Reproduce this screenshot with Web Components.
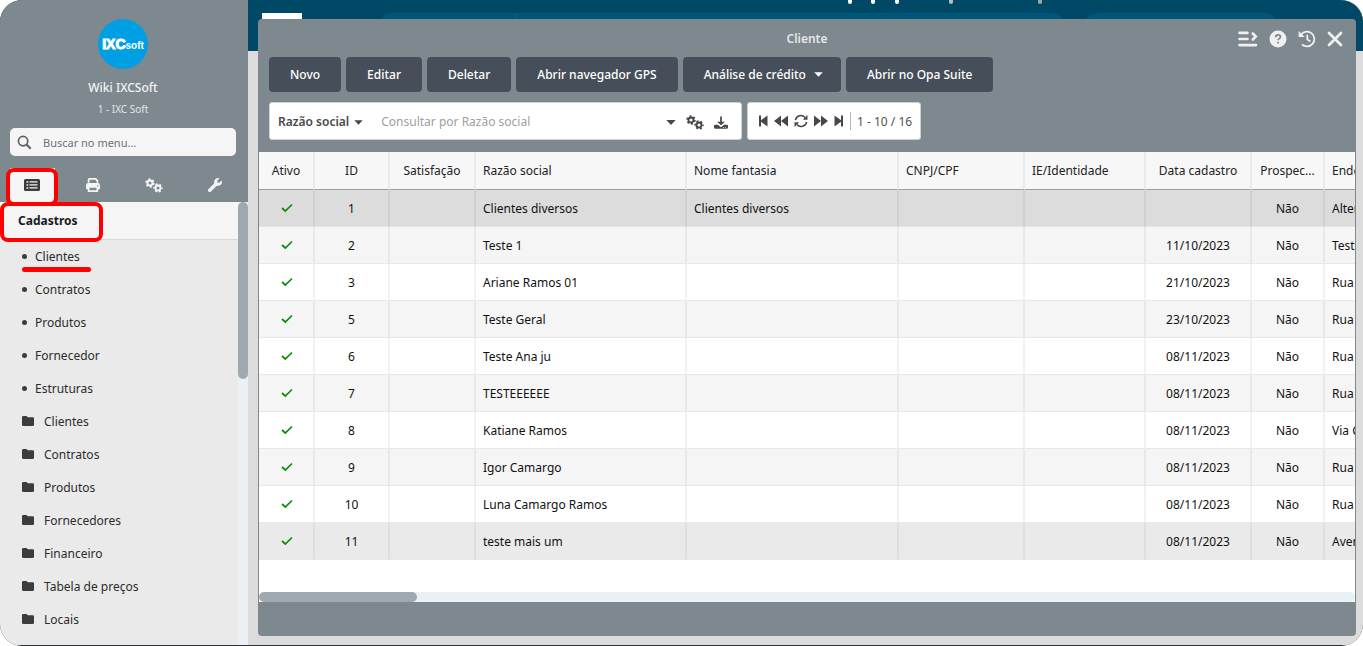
<!DOCTYPE html>
<html lang="pt-BR">
<head>
<meta charset="utf-8">
<title>Cliente - IXCSoft</title>
<style>
html, body { margin: 0; height: 100%; background: #fff; }
body { font: 12px/16px "Noto Sans", "Open Sans", sans-serif; color: #1b1c1e; }
</style>
</head>
<body>
<ixc-app></ixc-app>

<script>
const ICONS = {
  search: ['0 0 16 16', '<circle cx="6.5" cy="6.5" r="5" fill="none" stroke="currentColor" stroke-width="1.8"/><path d="M10.2 10.2 14.6 14.6" stroke="currentColor" stroke-width="2.2"/>'],
  list: ['0 0 16 12', '<path fill-rule="evenodd" d="M1.5 0h13A1.5 1.5 0 0 1 16 1.500v9a1.500 1.500 0 0 1-1.500 1.500h-13A1.500 1.500 0 0 1 0 10.500v-9A1.500 1.500 0 0 1 1.500 0zM2.500 2.200v1.600h1.800V2.200zm3 .1v1.300h8V2.300zm-3 2.900v1.600h1.800V5.200zm3 .1v1.300h8V5.300zm-3 2.900v1.600h1.800V8.200zm3 .1v1.300h8V8.300z"/>'],
  print: ['0 0 16 16', '<path d="M3 5.500V2a1 1 0 0 1 1-1h7l2 2v2.500" fill="none" stroke="currentColor" stroke-width="2"/><path fill-rule="evenodd" d="M2.500 5.800h11A2.500 2.500 0 0 1 16 8.300V12a.8.8 0 0 1-.8.8H14V15a1 1 0 0 1-1 1H3a1 1 0 0 1-1-1v-2.200H.8A.8.800 0 0 1 0 12V8.300a2.500 2.500 0 0 1 2.500-2.500zM4 11v3h8v-3zm8.800-3v1.300h1.300V8z"/>'],
  cogs: ['0 0 18 15', '<g fill="none" stroke="currentColor"><circle cx="5" cy="5" r="2.500" stroke-width="1.900"/><circle cx="5" cy="5" r="3.900" stroke-width="1.600" stroke-dasharray="2 2.084"/><circle cx="13" cy="10" r="2.500" stroke-width="1.900"/><circle cx="13" cy="10" r="3.900" stroke-width="1.600" stroke-dasharray="2 2.084" stroke-dashoffset="1"/></g>'],
  wrench: ['0 0 512 512', '<path d="M507.730 109.100c-2.240-9.030-13.540-12.090-20.120-5.510l-74.360 74.360-67.880-11.310-11.310-67.880 74.360-74.360c6.620-6.620 3.430-17.900-5.660-20.160-47.380-11.740-99.550.91-136.580 37.930-39.640 39.640-50.550 97.100-34.050 147.200L18.740 402.760c-24.990 24.990-24.990 65.510 0 90.500 24.990 24.990 65.510 24.990 90.500 0l213.210-213.210c50.120 16.710 107.470 5.680 147.370-34.220 37.070-37.070 49.700-89.320 37.910-136.730z"/>'],
  folder: ['0 0 12 10', '<path d="M1.200 0h3.300l1.300 1.300h5A1.200 1.200 0 0 1 12 2.500v6.300A1.200 1.200 0 0 1 10.800 10H1.200A1.200 1.200 0 0 1 0 8.800V1.200A1.200 1.200 0 0 1 1.200 0z"/>'],
  caret: ['0 0 10 5', '<path d="M.3 0h9.400L5 5z"/>'],
  check: ['0 0 12 10', '<path d="M1 5l3.300 3L11 1.500" fill="none" stroke="currentColor" stroke-width="1.700"/>'],
  download: ['0 0 16 16', '<path d="M7 1h2v6h3.500L8 11.200 3.500 7H7z"/><path fill-rule="evenodd" d="M1.200 10.500h3.300L8 13.300l3.500-2.800h3.300A1.200 1.200 0 0 1 16 11.700v2.100a1.200 1.200 0 0 1-1.200 1.200H1.200A1.200 1.200 0 0 1 0 13.800v-2.100a1.200 1.200 0 0 1 1.200-1.200zM10.500 13v1h1v-1zm2.200 0v1h1v-1z"/>'],
  first: ['0 0 10 12', '<path d="M1 .5h2v4.700L9.500 .5v11L3 6.800v4.700H1z"/>'],
  prev: ['0 0 14 12', '<path d="M7 .5v11L0 6zM14 .5v11L7 6z"/>'],
  next: ['0 0 14 12', '<path d="M0 .5v11L7 6zM7 .5v11L14 6z"/>'],
  last: ['0 0 10 12', '<path d="M9 .5H7v4.700L.5 .5v11L7 6.800v4.700h2z"/>'],
  sync: ['0 0 14 14', '<path d="M1.400 6.200A5.500 5.500 0 0 1 11 3.400M12.600 7.800A5.500 5.500 0 0 1 3 10.600" fill="none" stroke="currentColor" stroke-width="1.500"/><path d="M13.500 1v4.800H8.800zM.5 13v-4.800h4.700z"/>'],
  dock: ['0 0 20 16', '<path d="M1.500 1.900h8M1.500 8h8M1.500 14.100h16.500M14.800 2.500l3 3-3 3" fill="none" stroke="currentColor" stroke-width="2.600" stroke-linecap="round"/>'],
  help: ['0 0 18 18', '<circle cx="9" cy="9" r="8.500"/><path d="M6.600 7.200C6.700 5.600 7.700 4.900 9 4.900c1.400 0 2.400.8 2.400 2 0 1.700-2.300 1.700-2.300 3.400M9.100 11.800v1.700" fill="none" stroke="#7d898e" stroke-width="1.700"/>'],
  history: ['0 0 18 18', '<path d="M3.200 4.400A7.400 7.400 0 1 1 4 14.500M9.300 4.800v4.600l3 2.200" fill="none" stroke="currentColor" stroke-width="1.800"/><path d="M.6 1v6h6z"/>'],
  close: ['0 0 16 16', '<path d="M2 2l12 12M14 2 2 14" fill="none" stroke="currentColor" stroke-width="2.700" stroke-linecap="round"/>'],
};

const icon = (name, width, height) =>
  `<svg aria-hidden="true" width="${width}" height="${height}" viewBox="${ICONS[name][0]}" fill="currentColor">${ICONS[name][1]}</svg>`;

const BASE = `
  *, *::before { box-sizing: border-box; }
  svg { display: block; flex: none; }
  button, input { font: inherit; color: inherit; margin: 0; padding: 0; border: 0; background: none; outline: 0; }
  button { cursor: pointer; }
  a { color: inherit; text-decoration: none; }
`;

class BaseElement extends HTMLElement {
  connectedCallback() {
    if (this.shadowRoot) return;
    const t = document.createElement('template');
    t.innerHTML = `<style>${BASE}${this.styles()}</style>${this.markup()}`;
    this.attachShadow({ mode: 'open' }).append(t.content.cloneNode(true));
  }
  styles() { return ''; }
  markup() { return '<slot></slot>'; }
}

customElements.define('ixc-app', class extends BaseElement {
  styles() { return `
    :host { display: grid; grid-template-columns: 248px 1fr; height: 100vh; position: relative; overflow: hidden;
      border-radius: 22px; background: #2e3236; padding-bottom: 1px; box-sizing: border-box; }
    ixc-sidebar, ixc-desktop { min-width: 0; min-height: 0; }
  `; }
  markup() { return `
    <ixc-sidebar></ixc-sidebar>
    <ixc-desktop><ixc-window heading="Cliente"></ixc-window></ixc-desktop>
  `; }
});

customElements.define('ixc-logo', class extends BaseElement {
  styles() { return `
    :host { display: flex; align-items: baseline; justify-content: center; width: 50px; height: 50px; border-radius: 50%;
      background: #009fe3; color: #fff; font: bold 14px/50px "Liberation Sans", sans-serif; }
    span { -webkit-text-stroke: 1px #fff; }
    small { font-size: 10px; }
  `; }
  markup() { return '<span>IXC</span><small>soft</small>'; }
});

customElements.define('ixc-sidebar', class extends BaseElement {
  styles() { return `
    :host { display: flex; flex-direction: column; position: relative; background: #7d898e; }
    header { display: flex; flex-direction: column; align-items: center; padding: 19px 2px 0 0; color: #f2f4f4; }
    header strong { font-weight: 500; margin-top: 11px; }
    header span { font-size: 10px; margin-top: 5px; color: #e2e6e7; }
    form { display: flex; align-items: center; height: 28px; margin: 11px 12px 0 10px; padding-left: 7px; gap: 11px;
      border-radius: 5px; background: #f5f5f5; color: #606060; }
    form input { flex: 1; min-width: 0; height: 28px; padding-top: 1px; font-size: 11px; }
    form input::placeholder { color: #707070; opacity: 1; }
    nav.tabs { display: grid; grid-template-columns: repeat(4, 1fr); height: 34px; margin: 12px 3px 0 2px; color: #f5f5f5; }
    nav.tabs button { display: grid; place-items: center; }
    nav.tabs button.active { background: #f5f5f5; color: #3c3c3c; margin: 0 8px; }
    .menu { flex: 1; min-height: 0; display: flex; background: #eaeaea; }
    .list { flex: 1; overflow: hidden; }
    h2 { margin: 0; font-size: 12px; line-height: 37px; padding-left: 18px; background: #f5f5f5; border-bottom: 1px solid #dadada; }
    .bar { width: 10px; background: #e9f1f5; }
    .bar div { height: 40%; border-radius: 5px; background: #a1a9b0; }
    .mark { position: absolute; border: 4px solid #f00; border-radius: 8px; pointer-events: none; }
    .tab-mark { left: 6px; top: 168px; width: 52px; height: 38px; }
    .title-mark { left: 0; top: 202px; width: 103px; height: 40px; }
    .line { left: 22px; top: 267px; width: 69px; height: 5px; border: 0; border-radius: 3px; background: #f00; }
  `; }
  markup() {
    const links = ['Clientes', 'Contratos', 'Produtos', 'Fornecedor', 'Estruturas'];
    const folders = ['Clientes', 'Contratos', 'Produtos', 'Fornecedores', 'Financeiro', 'Tabela de preços', 'Locais'];
    return `
    <header><ixc-logo></ixc-logo><strong>Wiki IXCSoft</strong><span>1 - IXC Soft</span></header>
    <form role="search">${icon('search', 15, 15)}<input type="text" aria-label="Buscar no menu" placeholder="Buscar no menu..."></form>
    <nav class="tabs">
      <button type="button" class="active" aria-label="Menu">${icon('list', 16, 12)}</button>
      <button type="button" aria-label="Relatórios">${icon('print', 14, 14)}</button>
      <button type="button" aria-label="Configurações">${icon('cogs', 18, 15)}</button>
      <button type="button" aria-label="Ferramentas">${icon('wrench', 14, 14)}</button>
    </nav>
    <div class="menu">
      <div class="list">
        <h2>Cadastros</h2>
        ${links.map(l => `<ixc-menu-item>${l}</ixc-menu-item>`).join('')}
        ${folders.map(l => `<ixc-menu-item folder>${l}</ixc-menu-item>`).join('')}
      </div>
      <div class="bar"><div></div></div>
    </div>
    <div class="mark tab-mark"></div><div class="mark title-mark"></div><div class="mark line"></div>`;
  }
});

customElements.define('ixc-menu-item', class extends BaseElement {
  styles() { return `
    :host { display: block; color: #2c2c2c; }
    a { display: flex; align-items: center; height: 33px; padding-left: 22px; gap: 8px; }
    :host([folder]) a { gap: 10px; }
    i { width: 5px; height: 5px; border-radius: 50%; background: #3c3c3c; }
    svg { color: #3c3c3c; margin-bottom: 1px; }
  `; }
  markup() { return `<a href="#">${this.hasAttribute('folder') ? icon('folder', 12, 10) : '<i></i>'}<slot></slot></a>`; }
});

customElements.define('ixc-desktop', class extends BaseElement {
  styles() { return `
    :host { display: block; position: relative; background: #dcdcdc; }
    .top { display: flex; height: 51px; padding: 13px 84px 0 14px; background: #004966; }
    .brand { width: 40px; background: #fff; }
    .field { height: 30px; border-radius: 20px; background: #00567a; margin-left: 76px; flex: 688; }
    .field + .field { margin-left: 17px; flex: 196; }
    .field i { display: block; width: 1px; height: 30px; margin-left: 138px; background: #126285; }
    .dots i { position: absolute; top: 0; width: 4px; height: 4px; border-radius: 0 0 2px 2px; background: #fff; }
    .dots i:nth-child(1) { left: 600px; } .dots i:nth-child(2) { left: 623px; }
    .dots i:nth-child(3) { left: 647px; } .dots i:nth-child(4) { left: 701px; background: #bbb; }
    .dots i:nth-child(5) { left: 790px; background: #9aa; }
    ::slotted(ixc-window) { position: absolute; inset: 19px 7px 9px 10px; }
  `; }
  markup() { return `
    <div class="top"><div class="brand"></div><div class="field"><i></i></div><div class="field"></div></div>
    <div class="dots"><i></i><i></i><i></i><i></i><i></i></div>
    <slot></slot>`; }
});

customElements.define('ixc-button', class extends BaseElement {
  styles() { return `
    :host { display: block; }
    button { display: flex; align-items: center; gap: 8px; height: 35px; padding: 0 21px; border-radius: 4px;
      background: #464f59; color: #fff; font-weight: 500; white-space: nowrap; }
    :host([menu]) button { padding-right: 18px; }
  `; }
  markup() { return `<button type="button"><slot></slot>${this.hasAttribute('menu') ? icon('caret', 9, 5) : ''}</button>`; }
});

customElements.define('ixc-window', class extends BaseElement {
  styles() { return `
    :host { display: flex; flex-direction: column; overflow: hidden; border-radius: 4px; background: #7d898e; }
    header { display: grid; grid-template-columns: 1fr auto 1fr; align-items: center; height: 38px; padding-top: 2px; color: #f0f0f0; }
    h1 { grid-column: 2; margin: 0; font-size: 12px; font-weight: 600; color: #e4e7e8; }
    .controls { display: flex; justify-content: flex-end; align-items: center; gap: 11px; padding-right: 13px; }
    .controls button { display: block; }
    .actions { display: flex; gap: 5px; padding: 0 11px; }
    .tools { display: flex; gap: 5px; padding: 10px 11px 12px; }
    .box { display: flex; align-items: center; height: 38px; border: 1px solid #cfd2d4; border-radius: 3px; background: #fff; color: #484848; }
    .search { width: 473px; padding: 2px 13px 0 8px; }
    .search .key { display: flex; align-items: center; gap: 5px; font-weight: 600; }
    .search input { flex: 1; min-width: 0; margin-left: 18px; }
    .search input::placeholder { color: #a0a0a0; opacity: 1; }
    .search .icons { display: flex; align-items: center; gap: 10px; }
    .pager { padding: 0 8px 0 10px; gap: 6px; }
    .pager span { padding: 2px 0 0 6px; border-left: 1px solid #b5b5b5; color: #505050; }
    ixc-grid { flex: 1; min-height: 0; margin: 0 1px; }
    footer { height: 34px; }
  `; }
  markup() { return `
    <header><h1>${this.getAttribute('heading')}</h1>
      <div class="controls">
        <button type="button" aria-label="Encaixar">${icon('dock', 20, 16)}</button>
        <button type="button" aria-label="Ajuda">${icon('help', 18, 18)}</button>
        <button type="button" aria-label="Histórico">${icon('history', 18, 18)}</button>
        <button type="button" aria-label="Fechar">${icon('close', 16, 16)}</button>
      </div>
    </header>
    <div class="actions">
      <ixc-button>Novo</ixc-button><ixc-button>Editar</ixc-button><ixc-button>Deletar</ixc-button>
      <ixc-button>Abrir navegador GPS</ixc-button><ixc-button menu>Análise de crédito</ixc-button><ixc-button>Abrir no Opa Suite</ixc-button>
    </div>
    <div class="tools">
      <div class="box search">
        <button type="button" class="key">Razão social ${icon('caret', 9, 5)}</button>
        <input type="text" aria-label="Consultar" placeholder="Consultar por Razão social">
        <div class="icons">
          <button type="button" aria-label="Opções">${icon('caret', 10, 5)}</button>
          <button type="button" aria-label="Filtros">${icon('cogs', 18, 15)}</button>
          <button type="button" aria-label="Exportar">${icon('download', 14, 15)}</button>
        </div>
      </div>
      <div class="box pager">
        <button type="button" aria-label="Primeira">${icon('first', 10, 12)}</button>
        <button type="button" aria-label="Anterior">${icon('prev', 14, 12)}</button>
        <button type="button" aria-label="Atualizar">${icon('sync', 14, 14)}</button>
        <button type="button" aria-label="Próxima">${icon('next', 14, 12)}</button>
        <button type="button" aria-label="Última">${icon('last', 10, 12)}</button>
        <span>1 - 10 / 16</span>
      </div>
    </div>
    <ixc-grid></ixc-grid>
    <footer></footer>`; }
});

customElements.define('ixc-grid', class extends BaseElement {
  styles() { return `
    :host { display: flex; flex-direction: column; background: #fff; }
    .view { flex: 1; min-height: 0; overflow: hidden; }
    table { table-layout: fixed; width: 1216px; border-collapse: separate; border-spacing: 0; }
    th, td { height: 37px; padding: 2px 5px 0 7px; border-bottom: 1px solid #e8e8e8; border-right: 2px solid rgba(0,0,0,.05);
      text-align: left; font-weight: 400; white-space: nowrap; overflow: hidden; color: #111; }
    th { height: 38px; padding-top: 0; background: #f7f7f7; border-bottom-color: #97a1a6; color: #222; }
    .c { text-align: center; padding-left: 5px; }
    td:first-child { padding: 0 5px 0 6px; }
    tbody tr:nth-child(odd) { background: #fff; }
    tbody tr:nth-child(even) { background: #f5f5f5; }
    tbody tr.selected { background: #dcdcdc; }
    tbody tr:last-child { background: #eaeaea; }
    tbody tr.selected td { border-bottom-color: #e4e4e4; }
    svg { margin: auto; color: #0d8a0d; }
    .bar { height: 10px; border-radius: 5px; background: #e9f1f5; }
    .bar div { width: 158px; height: 10px; border-radius: 5px; background: #a1a9b0; }
  `; }
  markup() {
    const cols = [['Ativo', 56, 1], ['ID', 75, 1], ['Satisfação', 86, 1], ['Razão social', 211], ['Nome fantasia', 212],
      ['CNPJ/CPF', 126], ['IE/Identidade', 121], ['Data cadastro', 106, 1], ['Prospec...', 73, 1], ['Endereço', 150]];
    const rows = [
      [1, 'Clientes diversos', 'Clientes diversos', '', 'Alterar'],
      [2, 'Teste 1', '', '11/10/2023', 'Teste'],
      [3, 'Ariane Ramos 01', '', '21/10/2023', 'Rua'],
      [5, 'Teste Geral', '', '23/10/2023', 'Rua'],
      [6, 'Teste Ana ju', '', '08/11/2023', 'Rua'],
      [7, 'TESTEEEEEE', '', '08/11/2023', 'Rua'],
      [8, 'Katiane Ramos', '', '08/11/2023', 'Via C'],
      [9, 'Igor Camargo', '', '08/11/2023', 'Rua'],
      [10, 'Luna Camargo Ramos', '', '08/11/2023', 'Rua'],
      [11, 'teste mais um', '', '08/11/2023', 'Avenida'],
    ];
    const cell = (v, i) => `<td${cols[i][2] ? ' class="c"' : ''}>${v}</td>`;
    return `
    <div class="view"><table>
      <colgroup>${cols.map(c => `<col style="width:${c[1]}px">`).join('')}</colgroup>
      <thead><tr>${cols.map(c => `<th scope="col"${c[2] ? ' class="c"' : ''}>${c[0]}</th>`).join('')}</tr></thead>
      <tbody>${rows.map(([id, name, fantasy, date, address], n) =>
        `<tr${n ? '' : ' class="selected"'}>${[icon('check', 12, 10), id, '', name, fantasy, '', '', date, 'Não', address].map(cell).join('')}</tr>`).join('')}</tbody>
    </table></div>
    <div class="bar"><div></div></div>`;
  }
});
</script>
</body>
</html>
